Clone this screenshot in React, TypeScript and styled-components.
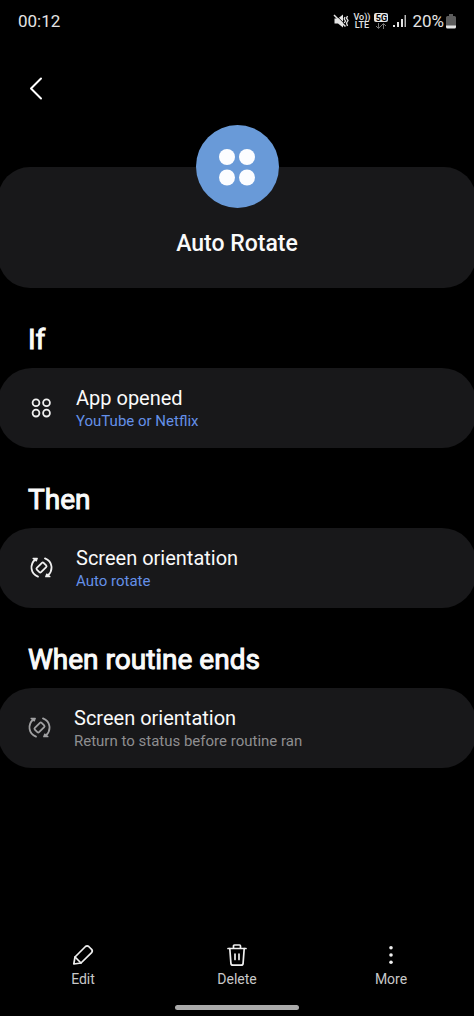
import React from "react";
import styled, { createGlobalStyle } from "styled-components";

const GlobalStyle = createGlobalStyle`
  *, *::before, *::after { box-sizing: border-box; }
  body {
    margin: 0;
    background: #000;
    color: #fafafa;
    font-family: Roboto, "Noto Sans", sans-serif;
  }
  h1, h2, p { margin: 0; }
  button {
    border: 0;
    padding: 0;
    background: none;
    color: inherit;
    font: inherit;
    cursor: pointer;
  }
  svg { display: block; flex: none; }
`;

const Screen = styled.div`
  display: flex;
  flex-direction: column;
  min-height: 100vh;
  overflow: hidden;
`;

const StatusBar = styled.header`
  display: flex;
  align-items: center;
  justify-content: space-between;
  height: 42px;
  padding: 0 18px;
  font-size: 17px;
  line-height: 20px;
  color: #e4e4e4;
`;

const StatusIcons = styled.div`
  display: flex;
  align-items: center;
  gap: 5px;
`;

const NetworkLabel = styled.span`
  display: flex;
  flex-direction: column;
  align-items: center;
  width: 15px;
  font-size: 9px;
  line-height: 8px;
  font-weight: 500;
  white-space: nowrap;
`;

const Network5G = styled.span`
  display: flex;
  flex-direction: column;
  align-items: center;
  gap: 1px;
`;

const Badge5G = styled.span`
  width: 14px;
  height: 9px;
  border-radius: 2px;
  background: #e4e4e4;
  color: #000;
  font-size: 9px;
  line-height: 10px;
  font-weight: 700;
  text-align: center;
`;

const Battery = styled.span`
  display: flex;
  align-items: center;
  gap: 2px;
`;

const TopBar = styled.nav`
  display: flex;
  align-items: center;
  height: 92px;
  padding: 0 20px;
`;

const BackButton = styled.button`
  display: grid;
  place-items: center;
  width: 32px;
  height: 32px;
`;

const Hero = styled.section`
  display: flex;
  flex-direction: column;
  align-items: center;
  gap: 21px;
  height: 121px;
  margin: 33px -2px 0;
  border-radius: 32px;
  background: #18181a;
`;

const HeroIcon = styled.div`
  display: grid;
  place-items: center;
  width: 83px;
  height: 83px;
  margin-top: -42px;
  border-radius: 50%;
  background: #699ad8;
`;

const HeroTitle = styled.h1`
  font-size: 23px;
  line-height: 30px;
  font-weight: 500;
`;

const Sections = styled.main`
  flex: 1;
`;

const Heading = styled.h2`
  padding: 34px 28px 10px;
  font-size: 28px;
  line-height: 36px;
  font-weight: 400;
  -webkit-text-stroke: 1px currentColor;
`;

const Card = styled.button<{ $dimmed?: boolean }>`
  display: flex;
  align-items: center;
  gap: 23px;
  width: calc(100% + 4px);
  height: 80px;
  margin: 0 -2px;
  padding: 0 ${(p) => (p.$dimmed ? 29 : 31)}px;
  border-radius: 34px;
  background: #18181a;
  text-align: left;

  svg { color: ${(p) => (p.$dimmed ? "#a0a0a2" : "#f0f0f0")}; }
`;

const CardText = styled.span`
  display: flex;
  flex-direction: column;
  padding-top: 2px;
`;

const CardTitle = styled.span`
  font-size: 20px;
  line-height: 24px;
`;

const CardDetail = styled.span<{ $muted?: boolean }>`
  font-size: 15px;
  line-height: 22px;
  color: ${(p) => (p.$muted ? "#8e8e90" : "#6490e8")};
`;

const ActionBar = styled.footer`
  display: grid;
  grid-template-columns: repeat(3, 1fr);
  padding: 0 6px;
`;

const Action = styled.button`
  display: flex;
  flex-direction: column;
  align-items: center;
  gap: 3px;
  font-size: 14px;
  line-height: 18px;
  color: #c8c8c8;

  svg { color: #f0f0f0; }
`;

const HomeHandle = styled.div`
  width: 26%;
  height: 5px;
  margin: 17px auto 6px;
  border-radius: 3px;
  background: #aaa;
`;

const MuteIcon = () => (
  <svg width="16" height="16" viewBox="0 0 16 16" aria-hidden="true">
    <path d="M1.500 5.500H5L10 1.500v13L5 10.500H1.500z" fill="currentColor" />
    <path d="M2 1.300L13 12.300" stroke="#000" strokeWidth="1" />
    <path d="M1 2L12.500 13.500" stroke="currentColor" strokeWidth="1.500" />
    <path d="M12 4l-.8 2 1.300 2-1.300 2M14.500 3l-1 2.200 1.500 2.300-1.500 2.500 1 3" fill="none" stroke="currentColor" strokeWidth="1.300" />
  </svg>
);

const DataArrows = () => (
  <svg width="12" height="6" viewBox="0 0 12 6" fill="none" stroke="#777" aria-hidden="true">
    <path d="M3.500 0v5M1 3l2.500 2.500L6 3M8.500 6V1M6 3L8.500.5 11 3" />
  </svg>
);

const SignalIcon = () => (
  <svg width="14" height="14" viewBox="0 0 14 14" fill="currentColor" aria-hidden="true">
    <path d="M0 11h2v2H0zM4 8h2v5H4zM8 5h2v8H8z" />
    <path d="M11.500 1h1.500v12h-1.500z" opacity=".8" />
  </svg>
);

const BatteryIcon = () => (
  <svg width="10" height="15" viewBox="0 0 10 15" aria-hidden="true">
    <path d="M3 0h4v2h1.500Q10 2 10 3.500V12H0V3.500Q0 2 1.500 2H3z" fill="#5c5c5c" />
    <path d="M0 11.500h10V13q0 1.500-1.500 1.500h-7Q0 14.500 0 13z" fill="#e4e4e4" />
  </svg>
);

const BackIcon = () => (
  <svg width="14" height="24" viewBox="0 0 14 24" fill="none" stroke="#fff" strokeWidth="2" strokeLinecap="round" strokeLinejoin="round" aria-hidden="true">
    <path d="M12 2.500L2 12.500l10 10" />
  </svg>
);

const AppsSolidIcon = () => (
  <svg width="38" height="38" viewBox="0 0 38 38" fill="#fcfdff" aria-hidden="true">
    <circle cx="9" cy="9" r="8" />
    <circle cx="29" cy="9" r="8" />
    <circle cx="9" cy="29.500" r="8" />
    <circle cx="29" cy="29.500" r="8" />
  </svg>
);

const AppsIcon = () => (
  <svg width="24" height="24" viewBox="0 0 24 24" fill="none" stroke="currentColor" strokeWidth="1.800" aria-hidden="true">
    <circle cx="7" cy="6.800" r="3.400" />
    <circle cx="17.500" cy="6.800" r="3.400" />
    <circle cx="7" cy="17.100" r="3.400" />
    <circle cx="17.500" cy="17.100" r="3.400" />
  </svg>
);

const RotateIcon = () => (
  <svg width="24" height="24" viewBox="0 0 24 24" fill="none" stroke="currentColor" strokeWidth="1.800" strokeLinecap="round" strokeLinejoin="round" aria-hidden="true">
    <path d="M9 20.600C1.300 17.500.6 8.800 6 3.500" />
    <path d="M16 2.400C23.700 5.500 24.400 14.200 19 19.500" />
    <path d="M4 2.300H8.300L7.300 5z" fill="currentColor" strokeWidth="1.200" />
    <path d="M21 20.700H16.700L17.700 18z" fill="currentColor" strokeWidth="1.200" />
    <rect x="9.500" y="6.700" width="6" height="9.600" rx="1.200" transform="rotate(45 12.500 11.500)" />
  </svg>
);

const EditIcon = () => (
  <svg width="24" height="24" viewBox="0 0 24 24" fill="none" stroke="currentColor" strokeWidth="1.700" strokeLinecap="round" strokeLinejoin="round" aria-hidden="true">
    <path d="M2.800 21L4 14 14.500 3.500q1.600-1.400 3.200 0l2.900 2.900q1.400 1.600 0 3.200L10 20z" />
    <path d="M4 14L10 20" />
  </svg>
);

const DeleteIcon = () => (
  <svg width="24" height="24" viewBox="0 0 24 24" fill="none" stroke="currentColor" strokeWidth="1.700" strokeLinecap="round" strokeLinejoin="round" aria-hidden="true">
    <path d="M3 5.500h18M8.500 5V3q0-1 1-1h5q1 0 1 1v2" />
    <path d="M4.800 5.500l1.100 14.800q.2 1.900 2 1.900h8.200q1.800 0 2-1.900l1.100-14.800M10 11v5.500M14 11v5.500" />
  </svg>
);

const MoreIcon = () => (
  <svg width="24" height="24" viewBox="0 0 24 24" fill="currentColor" aria-hidden="true">
    <circle cx="12" cy="4.800" r="1.800" />
    <circle cx="12" cy="12" r="1.800" />
    <circle cx="12" cy="19.200" r="1.800" />
  </svg>
);

const routine = [
  { heading: "If", title: "App opened", detail: "YouTube or Netflix", Icon: AppsIcon, dimmed: false },
  { heading: "Then", title: "Screen orientation", detail: "Auto rotate", Icon: RotateIcon, dimmed: false },
  { heading: "When routine ends", title: "Screen orientation", detail: "Return to status before routine ran", Icon: RotateIcon, dimmed: true },
];

const actions = [
  { label: "Edit", Icon: EditIcon },
  { label: "Delete", Icon: DeleteIcon },
  { label: "More", Icon: MoreIcon },
];

export default function App() {
  return (
    <Screen>
      <GlobalStyle />
      <StatusBar>
        <span>00:12</span>
        <StatusIcons>
          <MuteIcon />
          <NetworkLabel>
            <span>Vo))</span>
            <span>LTE</span>
          </NetworkLabel>
          <Network5G>
            <Badge5G>5G</Badge5G>
            <DataArrows />
          </Network5G>
          <SignalIcon />
          <Battery>
            <span>20%</span>
            <BatteryIcon />
          </Battery>
        </StatusIcons>
      </StatusBar>
      <TopBar>
        <BackButton aria-label="Back">
          <BackIcon />
        </BackButton>
      </TopBar>
      <Hero>
        <HeroIcon>
          <AppsSolidIcon />
        </HeroIcon>
        <HeroTitle>Auto Rotate</HeroTitle>
      </Hero>
      <Sections>
        {routine.map(({ heading, title, detail, Icon, dimmed }) => (
          <section key={heading}>
            <Heading>{heading}</Heading>
            <Card $dimmed={dimmed}>
              <Icon />
              <CardText>
                <CardTitle>{title}</CardTitle>
                <CardDetail $muted={dimmed}>{detail}</CardDetail>
              </CardText>
            </Card>
          </section>
        ))}
      </Sections>
      <ActionBar>
        {actions.map(({ label, Icon }) => (
          <Action key={label}>
            <Icon />
            {label}
          </Action>
        ))}
      </ActionBar>
      <HomeHandle />
    </Screen>
  );
}
